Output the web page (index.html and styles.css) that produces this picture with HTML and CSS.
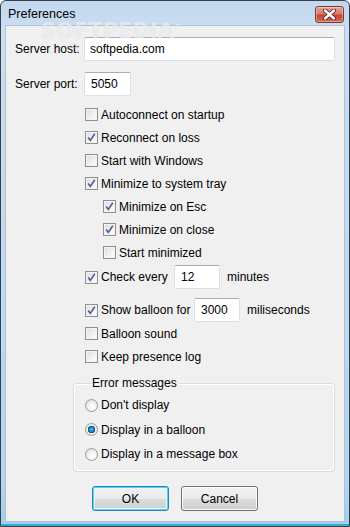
FILE: index.html
```html
<!DOCTYPE html>
<html>
  <head>
    <meta charset="utf-8">
    <title>Preferences</title>
    <link rel="stylesheet" href="styles.css">
  </head>

  <body>
    <div class="window">
      <header class="titlebar">
        <span class="titlebar__title">Preferences</span>
        <button class="titlebar__close" aria-label="Close">
          <svg width="13" height="11" viewBox="0 0 13 11">
            <path d="M2 1.5 L11 9.5 M11 1.5 L2 9.5" stroke="#5a2020" stroke-width="4.2" stroke-linecap="round"/>
            <path d="M2 1.5 L11 9.5 M11 1.5 L2 9.5" stroke="#ffffff" stroke-width="2.4" stroke-linecap="round"/>
          </svg>
        </button>
      </header>

      <div class="watermark">SOFTPEDIA<sup>™</sup></div>

      <form class="client">
        <div class="field field--host">
          <label class="field__label">Server host:</label>
          <input class="textbox textbox--wide" type="text" value="softpedia.com">
        </div>

        <div class="field field--port">
          <label class="field__label">Server port:</label>
          <input class="textbox textbox--port" type="text" value="5050">
        </div>

        <ul class="options">
          <li class="check"><span class="check__box"></span>Autoconnect on startup</li>
          <li class="check check--on"><span class="check__box"></span>Reconnect on loss</li>
          <li class="check"><span class="check__box"></span>Start with Windows</li>
          <li class="check check--on"><span class="check__box"></span>Minimize to system tray</li>
          <li class="check check--on check--sub"><span class="check__box"></span>Minimize on Esc</li>
          <li class="check check--on check--sub"><span class="check__box"></span>Minimize on close</li>
          <li class="check check--sub"><span class="check__box"></span>Start minimized</li>
          <li class="check check--on check--input check--every">
            <span class="check__box"></span>
            <span class="check__text check__text--every">Check every</span>
            <input class="textbox textbox--small" type="text" value="12">
            <span class="check__unit">minutes</span>
          </li>
          <li class="check check--on check--input check--balloon">
            <span class="check__box"></span>
            <span class="check__text check__text--balloon">Show balloon for</span>
            <input class="textbox textbox--small" type="text" value="3000">
            <span class="check__unit">miliseconds</span>
          </li>
          <li class="check"><span class="check__box"></span>Balloon sound</li>
          <li class="check"><span class="check__box"></span>Keep presence log</li>
        </ul>

        <fieldset class="group">
          <legend class="group__title">Error messages</legend>
          <div class="radio"><span class="radio__dot"></span>Don't display</div>
          <div class="radio radio--on"><span class="radio__dot"></span>Display in a balloon</div>
          <div class="radio"><span class="radio__dot"></span>Display in a message box</div>
        </fieldset>

        <div class="buttons">
          <button type="button" class="button button--default">OK</button>
          <button type="button" class="button">Cancel</button>
        </div>
      </form>
    </div>
  </body>
</html>
```

FILE: styles.css
```css
:root {
  --frame-top: #c2d8ef;
  --frame-bottom: #9fd0ea;
  --face: #f0f0f0;
  --text: #000000;
  --check-border: #8e8f8f;
  --check-mark: #4a5f97;
  --input-border: #abadb3;
}

html,
body {
  margin: 0;
  padding: 0;
  background: #ffffff;
}

body {
  font-family: 'Liberation Sans', Arial, sans-serif;
  font-size: 12px;
  color: var(--text);
}

.window {
  position: relative;
  box-sizing: border-box;
  width: 350px;
  height: 527px;
  border: 1px solid #3a3f46;
  border-radius: 6px 6px 0 0;
  background: linear-gradient(to bottom, var(--frame-top) 0, #cadff2 30px, #b4d6ee 480px, var(--frame-bottom) 100%);
  padding: 0 4px 4px;
  display: flex;
  flex-direction: column;
  box-shadow: inset 0 -2px 0 #38a9d9;
}

.titlebar {
  height: 24px;
  display: flex;
  align-items: center;
  justify-content: space-between;
  padding: 0 1px 0 3px;
}

.titlebar__title {
  font-size: 12.5px;
  padding-top: 1px;
}

.titlebar__close {
  width: 29px;
  height: 17px;
  margin-top: 2px;
  padding: 0;
  border: 1px solid #7a3a36;
  border-radius: 3px;
  background: linear-gradient(to bottom, #e3a597 0, #d77b6b 45%, #c7452f 55%, #d46a51 100%);
  box-shadow: inset 0 0 0 1px rgba(255, 255, 255, .35);
  display: flex;
  align-items: center;
  justify-content: center;
}

.watermark {
  position: absolute;
  left: 40px;
  top: 20px;
  line-height: 1;
  pointer-events: none;
  font-family: 'DejaVu Sans', sans-serif;
  font-weight: bold;
  font-size: 21px;
  color: rgba(255, 255, 255, .6);
  text-shadow: 0 0 1px rgba(150, 160, 170, .4);
}

.watermark sup {
  font-size: 8px;
}

.client {
  flex: 1;
  margin: 0;
  background: var(--face);
  border: 1px solid #a9c0d6;
  display: flex;
  flex-direction: column;
  padding: 11px 9px 0 8px;
}

.field {
  display: flex;
  align-items: center;
  height: 24px;
}

.field--port {
  margin-top: 11px;
}

.field__label {
  width: 69px;
  flex-shrink: 0;
  padding-left: 1px;
}

.textbox {
  box-sizing: border-box;
  height: 24px;
  margin: 0;
  padding: 0 6px;
  font-family: inherit;
  font-size: 12px;
  color: var(--text);
  background: #ffffff;
  border: 1px solid #dbdfe6;
  border-top-color: var(--input-border);
  border-radius: 2px;
  outline: none;
}

.textbox--wide {
  flex: 1;
  padding-left: 5px;
}

.textbox--port {
  width: 47px;
}

.textbox--small {
  width: 46px;
}

.options {
  list-style: none;
  margin: 7px 0 0;
  padding: 0 0 0 71px;
}

.check {
  display: flex;
  align-items: center;
  height: 23px;
}

.check--sub {
  padding-left: 18px;
}

.check--input {
  height: 24px;
}

.check--every {
  margin-top: 1px;
}

.check--balloon {
  margin-top: 9px;
}

.check__box {
  box-sizing: border-box;
  width: 13px;
  height: 13px;
  margin-right: 3px;
  flex-shrink: 0;
  border: 1px solid var(--check-border);
  background: linear-gradient(135deg, #dcdcdc 0, #f2f2f2 60%, #ffffff 100%);
  box-shadow: inset 0 0 0 1px #f4f4f4;
}

.check--on .check__box {
  background-color: #f4f4f4;
  background-image: url("data:image/svg+xml;utf8,<svg xmlns='http://www.w3.org/2000/svg' width='11' height='11' viewBox='0 0 11 11'><path d='M2.2 5.6 L4.3 8.4 L8.8 1.8' fill='none' stroke='%234a5f97' stroke-width='1.6'/></svg>"),
    linear-gradient(135deg, #dcdcdc 0, #f2f2f2 60%, #ffffff 100%);
  background-repeat: no-repeat;
  background-position: center;
}

.check__text--every {
  width: 73px;
}

.check__text--balloon {
  width: 93px;
}

.check__unit {
  margin-left: 7px;
}

.group {
  box-sizing: border-box;
  margin: 8px 0 0 59px;
  padding: 3px 0 0 11px;
  border: 1px solid #d5dfe5;
  border-radius: 3px;
  box-shadow: inset 0 0 0 1px #ffffff;
  height: 96px;
}

.group__title {
  padding: 0 2px;
  margin-left: 5px;
}

.radio {
  display: flex;
  align-items: center;
  height: 24.5px;
}

.radio__dot {
  box-sizing: border-box;
  width: 13px;
  height: 13px;
  margin-right: 3px;
  border-radius: 50%;
  border: 1px solid #9a9a9a;
  background: radial-gradient(circle at 60% 65%, #ffffff 0, #f4f4f4 40%, #d4d4d4 100%);
}

.radio--on .radio__dot {
  background: radial-gradient(circle, #4fc3f0 0, #1b7ab8 2.5px, #14467a 3.5px, #f2f2f2 4px, #dedede 100%);
}

.buttons {
  display: flex;
  justify-content: center;
  gap: 12px;
  margin-top: 14px;
  padding-left: 1px;
}

.button {
  box-sizing: border-box;
  width: 77px;
  height: 25px;
  padding: 0;
  font-family: inherit;
  font-size: 12px;
  color: var(--text);
  border: 1px solid #707070;
  border-radius: 3px;
  background: linear-gradient(to bottom, #f2f2f2 0, #ebebeb 50%, #dddddd 51%, #cfcfcf 100%);
  box-shadow: inset 0 0 0 1px #fcfcfc;
}

.button--default {
  border-color: #3c7fb1;
  box-shadow: inset 0 0 0 1px #48d7fb, inset 0 0 0 2px #eaf6fd;
}
```
